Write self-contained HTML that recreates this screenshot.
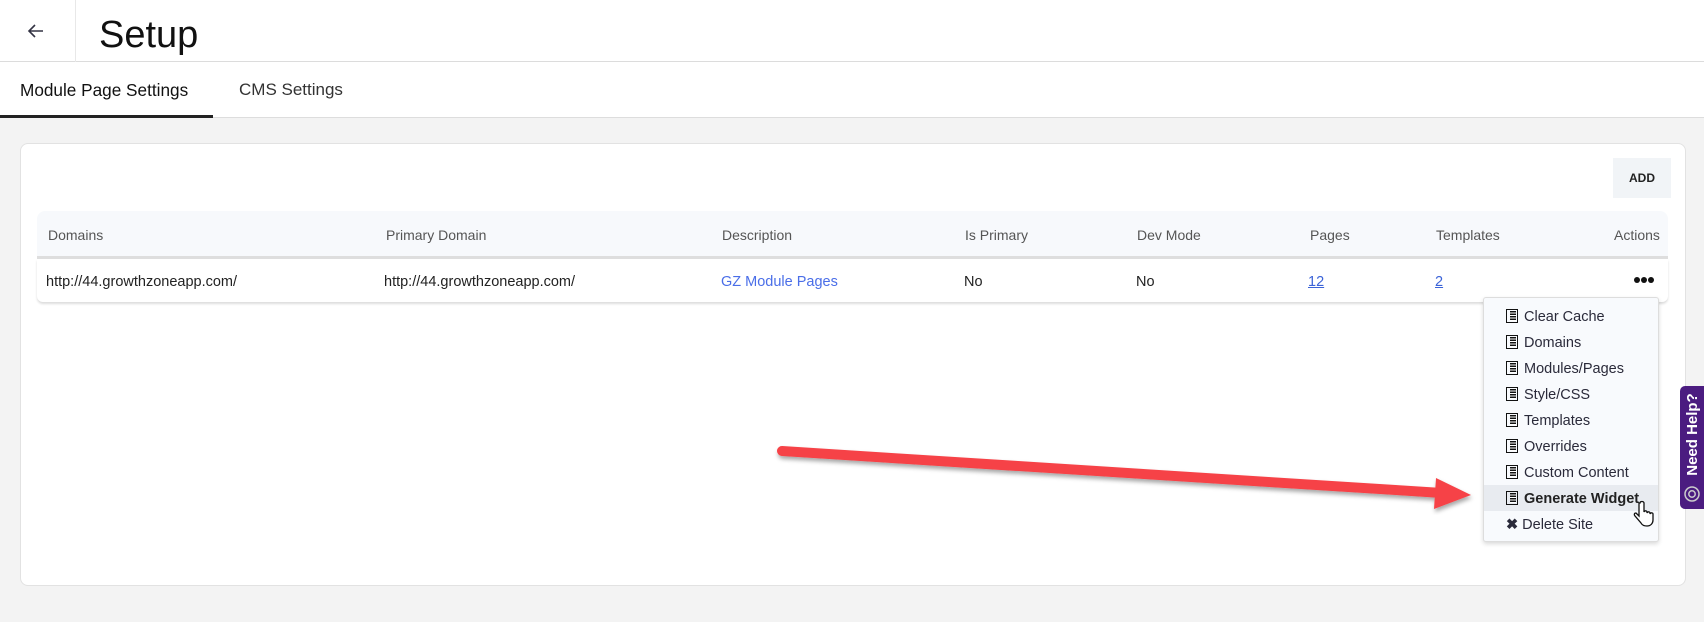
<!DOCTYPE html>
<html><head><meta charset="utf-8"><style>
*{box-sizing:border-box;margin:0;padding:0}
body{width:1704px;height:622px;overflow:hidden;background:#f3f3f3;font-family:"Liberation Sans",sans-serif;color:#222;position:relative}
.abs{position:absolute}
.hdr{left:0;top:0;width:1704px;height:62px;background:#fff;border-bottom:1px solid #dcdcdc}
.tabs{left:0;top:62px;width:1704px;height:56px;background:#fff;border-bottom:1px solid #ddd}
.card{left:20px;top:143px;width:1666px;height:443px;background:#fff;border:1px solid #e2e2e2;border-radius:8px}
.th{top:211px;height:48px;left:37px;width:1631px;background:#f7f9fc;border-bottom:3px solid #dedede;border-radius:8px 8px 0 0}
.tr{top:259px;height:43px;left:37px;width:1631px;background:#fff;box-shadow:0 2px 2px #ddd;border-radius:0 0 6px 6px}
.h{font-size:14px;color:#555;top:227px}
.c{font-size:14.5px;color:#222;top:274px}
.menu{left:1483px;top:297px;width:176px;height:245px;background:#f8fafd;border:1px solid #ddd;border-radius:3px;box-shadow:0 2px 4px rgba(0,0,0,.15)}
.mi{position:absolute;left:22px;font-size:14.5px;color:#2a2a3a;height:26px;line-height:26px;white-space:nowrap}
.ic{display:inline-block;width:12px;height:14px;border:1.5px solid #111;vertical-align:-2px;margin-right:6px;background:repeating-linear-gradient(#fff 0 1px,#111 1px 2.5px);background-clip:content-box;padding:1px 1px 1px 3px;background-color:#fff}
</style></head><body>
<div class="abs hdr"></div>
<div class="abs" style="left:75px;top:0;width:1px;height:62px;background:#e8e8e8"></div>
<svg class="abs" style="left:25px;top:22px" width="22" height="18" viewBox="0 0 22 18"><path d="M18 9H4M10 3L4 9l6 6" stroke="#334" stroke-width="1.6" fill="none"/></svg>
<div class="abs" style="left:99px;top:14px;font-size:38px;color:#111">Setup</div>
<div class="abs tabs"></div>
<div class="abs" style="left:20px;top:80px;font-size:17.2px;color:#111">Module Page Settings</div>
<div class="abs" style="left:239px;top:80px;font-size:17px;color:#333">CMS Settings</div>
<div class="abs" style="left:0;top:115px;width:213px;height:3px;background:#222"></div>
<div class="abs card"></div>
<div class="abs" style="left:1613px;top:158px;width:58px;height:40px;background:#f1f4f7;font-size:12px;font-weight:bold;text-align:center;line-height:40px;color:#222">ADD</div>
<div class="abs th"></div>
<div class="abs tr"></div>
<div class="abs h" style="left:48px">Domains</div>
<div class="abs h" style="left:386px">Primary Domain</div>
<div class="abs h" style="left:722px">Description</div>
<div class="abs h" style="left:965px">Is Primary</div>
<div class="abs h" style="left:1137px">Dev Mode</div>
<div class="abs h" style="left:1310px">Pages</div>
<div class="abs h" style="left:1436px">Templates</div>
<div class="abs h" style="left:1614px">Actions</div>
<div class="abs c" style="left:46px">http://44.growthzoneapp.com/</div>
<div class="abs c" style="left:384px">http://44.growthzoneapp.com/</div>
<div class="abs c" style="left:721px;color:#4a6ee8">GZ Module Pages</div>
<div class="abs c" style="left:964px">No</div>
<div class="abs c" style="left:1136px">No</div>
<div class="abs c" style="left:1308px;color:#3b63d8;text-decoration:underline">12</div>
<div class="abs c" style="left:1435px;color:#3b63d8;text-decoration:underline">2</div>
<svg class="abs" style="left:1633px;top:276px" width="22" height="8"><circle cx="4" cy="4" r="3" fill="#111"/><circle cx="11" cy="4" r="3" fill="#111"/><circle cx="18" cy="4" r="3" fill="#111"/></svg>
<div class="abs menu">
<div class="mi" style="top:6px"><span class="ic"></span>Clear Cache</div>
<div class="mi" style="top:32px"><span class="ic"></span>Domains</div>
<div class="mi" style="top:58px"><span class="ic"></span>Modules/Pages</div>
<div class="mi" style="top:84px"><span class="ic"></span>Style/CSS</div>
<div class="mi" style="top:110px"><span class="ic"></span>Templates</div>
<div class="mi" style="top:136px"><span class="ic"></span>Overrides</div>
<div class="mi" style="top:162px"><span class="ic"></span>Custom Content</div>
<div style="position:absolute;left:0;top:187px;width:174px;height:26px;background:#e8ebf0"></div>
<div class="mi" style="top:188px;font-weight:bold;color:#222"><span class="ic"></span>Generate Widget</div>
<div class="mi" style="top:214px"><span style="font-weight:bold;margin-right:4px">✖</span>Delete Site</div>
</div>
<svg class="abs" style="left:1632px;top:500px" width="24" height="30" viewBox="0 0 24 30"><path d="M7 3v13l-3-3c-2 0-2 2-1 3l6 7c1 2 3 3 6 3 4 0 6-3 6-6v-6c0-1-2-2-3 0v-1c0-1-2-2-3 0v-1c0-1-2-2-3 0V3c0-2-4-2-4 0z" fill="#fff" stroke="#111" stroke-width="1.3"/></svg>
<svg class="abs" style="left:0;top:0" width="1704" height="622">
<defs><filter id="s"><feDropShadow dx="1" dy="3" stdDeviation="2" flood-opacity=".35"/></filter></defs>
<g filter="url(#s)"><line x1="782" y1="451" x2="1442" y2="493" stroke="#f64347" stroke-width="10" stroke-linecap="round"/>
<path d="M1436 478L1471 495L1434 509Z" fill="#f64347"/></g>
</svg>
<div class="abs" style="left:1680px;top:386px;width:24px;height:123px;background:#4b1c80;border-radius:5px 0 0 5px"></div>
<div class="abs" style="left:1680px;top:386px;width:24px;height:96px;display:flex;align-items:center;justify-content:center"><div style="transform:rotate(-90deg);color:#fff;font-weight:bold;font-size:15px;white-space:nowrap">Need Help?</div></div>
<svg class="abs" style="left:1683px;top:485px" width="18" height="18" viewBox="0 0 18 18"><circle cx="9" cy="9" r="7" fill="none" stroke="#ccc" stroke-width="1.5"/><circle cx="9" cy="9" r="3.2" fill="none" stroke="#ccc" stroke-width="1.5"/></svg>
</body></html>
